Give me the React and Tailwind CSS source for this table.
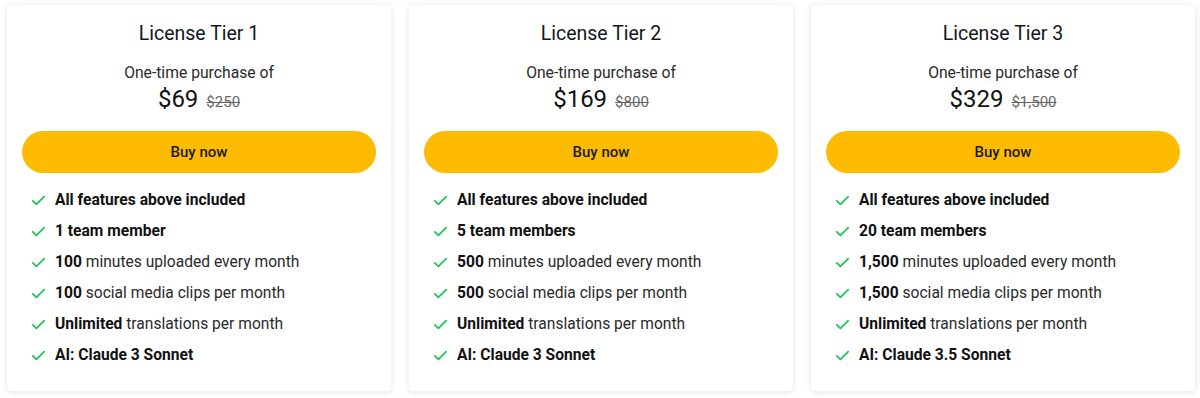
import React from 'react';

const tiers = [
  {
    name: 'License Tier 1',
    price: '$69',
    old: '$250',
    members: '1 team member',
    minutes: '100',
    clips: '100',
    ai: 'AI: Claude 3 Sonnet',
  },
  {
    name: 'License Tier 2',
    price: '$169',
    old: '$800',
    members: '5 team members',
    minutes: '500',
    clips: '500',
    ai: 'AI: Claude 3 Sonnet',
  },
  {
    name: 'License Tier 3',
    price: '$329',
    old: '$1,500',
    members: '20 team members',
    minutes: '1,500',
    clips: '1,500',
    ai: 'AI: Claude 3.5 Sonnet',
  },
];

const Check = () => (
  <svg width="17" height="17" viewBox="0 0 24 24" fill="none" stroke="#22c55e" strokeWidth="2.6" strokeLinecap="round" strokeLinejoin="round" className="shrink-0">
    <path d="M4 12.5l5 5L20 6.5" />
  </svg>
);

const Feature = ({ children }) => (
  <li className="flex items-center gap-[8px] h-[31px]">
    <Check />
    <span>{children}</span>
  </li>
);

const TierCard = ({ tier }) => {
  return (
    <div className="w-[384px] h-[386px] bg-white rounded-[4px] shadow-[0_1px_6px_rgba(0,0,0,0.12)] px-[15px] pt-[16px]">
      <h2 className="text-center text-[19.5px] leading-[26px] text-[#111820] font-normal">{tier.name}</h2>
      <p className="text-center text-[15.7px] leading-[20px] mt-[16px] text-[#2a2a2a]">One-time purchase of</p>
      <div className="flex items-baseline justify-center gap-[8px] mt-[1px]">
        <span className="text-[24px] leading-[30px] text-[#111]">{tier.price}</span>
        <span className="text-[15px] text-[#666] line-through">{tier.old}</span>
      </div>
      <button className="mt-[17px] w-full h-[42px] rounded-full bg-[#ffbb00] text-[15px] font-medium text-[#1a1a1a]">
        Buy now
      </button>
      <ul className="mt-[12px] pl-[8px] text-[15.6px] text-[#2a2a2a]">
        <Feature><b className="font-bold text-[#111]">All features above included</b></Feature>
        <Feature><b className="font-bold text-[#111]">{tier.members}</b></Feature>
        <Feature><b className="font-bold text-[#111]">{tier.minutes}</b> minutes uploaded every month</Feature>
        <Feature><b className="font-bold text-[#111]">{tier.clips}</b> social media clips per month</Feature>
        <Feature><b className="font-bold text-[#111]">Unlimited</b> translations per month</Feature>
        <Feature><b className="font-bold text-[#111]">{tier.ai}</b></Feature>
      </ul>
    </div>
  );
};

export default function App() {
  return (
    <div className="w-[1200px] h-[398px] bg-white flex gap-[18px] pl-[7px] pt-[5px]" style={{ fontFamily: 'Roboto, sans-serif' }}>
      {tiers.map((t) => (
        <TierCard key={t.name} tier={t} />
      ))}
    </div>
  );
}
